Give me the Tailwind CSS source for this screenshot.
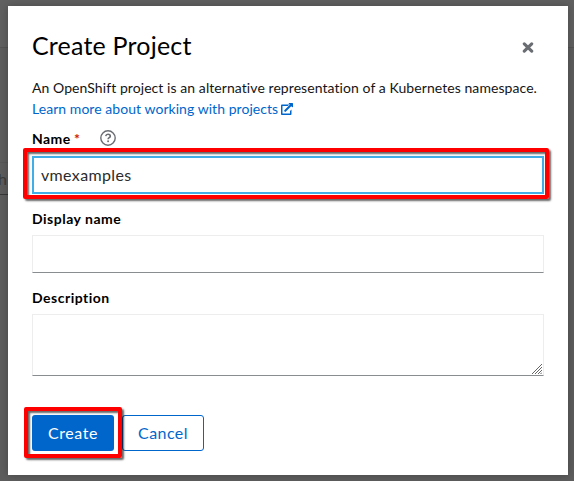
<!DOCTYPE html>
<html lang="en">
<head>
<meta charset="utf-8">
<title>Create Project</title>
<script src="https://cdn.jsdelivr.net/npm/@tailwindcss/browser@4"></script>
</head>
<body class="relative h-[481px] w-[574px] overflow-hidden bg-[#5d5d5d] font-['Lato','Liberation_Sans',sans-serif] text-[#151515]">
  <!-- Dimmed page behind the dialog -->
  <div class="absolute inset-x-0 top-0 h-12 border-b border-[#535353] bg-[#606060]"></div>
  <div class="absolute top-[162px] left-0 h-[33px] w-2 border-t border-b border-t-[#575757] border-b-[#383838]">
    <span class="absolute top-[4px] -left-[2px] text-[16px] leading-6 text-[#3c3c3c]">h</span>
  </div>

  <main class="relative mr-[6px] ml-2 mt-[6px] flex h-[469px] flex-col bg-white px-6 shadow-[0_0_8px_rgba(0,0,0,0.25)]">
    <header class="flex h-[71px] items-center justify-between pt-[10px]">
      <h1 class="-mt-[3px] text-[25px] leading-8 font-normal tracking-[0.2px] whitespace-nowrap text-black">Create Project</h1>
      <button aria-label="Close" class="mr-[10px] h-3 w-3">
        <svg class="block h-3 w-3" viewBox="0 0 12 12" fill="none" stroke="#6a6e73" stroke-width="3.1" stroke-linecap="round"><path d="M2.3 2.8 9.7 10.2M9.7 2.8 2.3 10.2"/></svg>
      </button>
    </header>

    <div class="text-[14px] leading-[21px] whitespace-nowrap">
      <p class="tracking-[0.07px]">An OpenShift project is an alternative representation of a Kubernetes namespace.</p>
      <a class="flex items-center text-[#0066cc]"><span class="tracking-[0.05px]">Learn more about working with projects</span>
        <svg class="ml-[3px] h-3 w-3" viewBox="0 0 512 512" fill="#0066cc"><path d="M448 279l-64 64v105H64V128h225l64-64H48C22 64 0 86 0 112v352c0 26 22 48 48 48h352c26 0 48-22 48-48zM488 0H355c-22 0-32 26-17 41l37 37-235 235c-9 9-9 25 0 34l25 25c9 9 25 9 34 0l235-235 37 37c15 15 41 5 41-17V24c0-13-11-24-24-24z"/></svg>
      </a>
    </div>

    <div class="mt-[9px] flex h-[21px] items-center text-[14px] leading-[21px] font-bold text-black">
      <label class="w-[39px] tracking-[0.45px]">Name</label><span class="ml-[3px] w-[6px] text-[#c9190b]">*</span>
      <svg class="ml-5 -mt-[2px] h-4 w-4" viewBox="0 0 16 16" fill="none" stroke="#6a6e73"><circle cx="8" cy="8" r="7.2" stroke-width="1.4"/><path d="M5.7 6.2C6 4.8 6.9 4.3 8 4.3c1.3 0 2.3.8 2.3 1.9 0 1.5-2.2 1.5-2.2 3" stroke-width="1.6"/><circle cx="8.1" cy="11.3" r=".95" fill="#6a6e73" stroke="none"/></svg>
    </div>
    <div class="relative mt-[7px] flex h-[38px] items-center border-2 border-[#41aee8] px-[7px] text-[16px] leading-6 text-[#2c2c2c]">
      <span class="tracking-[0.35px]">vmexamples</span>
      <div class="absolute -top-[10px] -right-[7px] -bottom-[7px] -left-[11px] rounded-[2px] border-4 border-[#ff0000] shadow-[2px_2px_2px_rgba(0,0,0,0.6),inset_2px_2px_2px_rgba(0,0,0,0.6)]"></div>
    </div>

    <label class="mt-[14px] block h-[21px] text-[14px] leading-[21px] font-bold text-black"><span class="tracking-[0.5px]">Display name</span></label>
    <div class="mt-[6px] h-[38px] shrink-0 border border-[#ededed] border-b-[#8a8d90]"></div>

    <label class="mt-[14px] block h-[21px] text-[14px] leading-[21px] font-bold text-black"><span class="tracking-[0.5px]">Description</span></label>
    <div class="mt-[6px] flex h-[62px] shrink-0 items-end justify-end border border-[#ededed] border-b-[#8a8d90] p-px">
      <svg class="h-[10px] w-[10px]" viewBox="0 0 10 10" stroke="#666" stroke-width="1"><path d="M0 10 10 0M3 10 10 3M6 10 10 6M8.5 10 10 8.5"/></svg>
    </div>

    <footer class="mt-[39px] flex text-[16px] leading-6">
      <button class="relative h-9 w-[82px] rounded-[3px] bg-[#0066cc] text-white"><span class="tracking-[0.55px]">Create</span>
        <span class="absolute -top-2 -right-2 -bottom-[7px] -left-2 z-10 rounded-[2px] border-4 border-[#ff0000] shadow-[2px_2px_2px_rgba(0,0,0,0.6),inset_2px_2px_2px_rgba(0,0,0,0.6)]"></span>
      </button>
      <button class="ml-2 h-9 w-[82px] rounded-[3px] border border-[#0066cc] text-[#0066cc]"><span class="tracking-[0.45px]">Cancel</span></button>
    </footer>
  </main>
</body>
</html>
